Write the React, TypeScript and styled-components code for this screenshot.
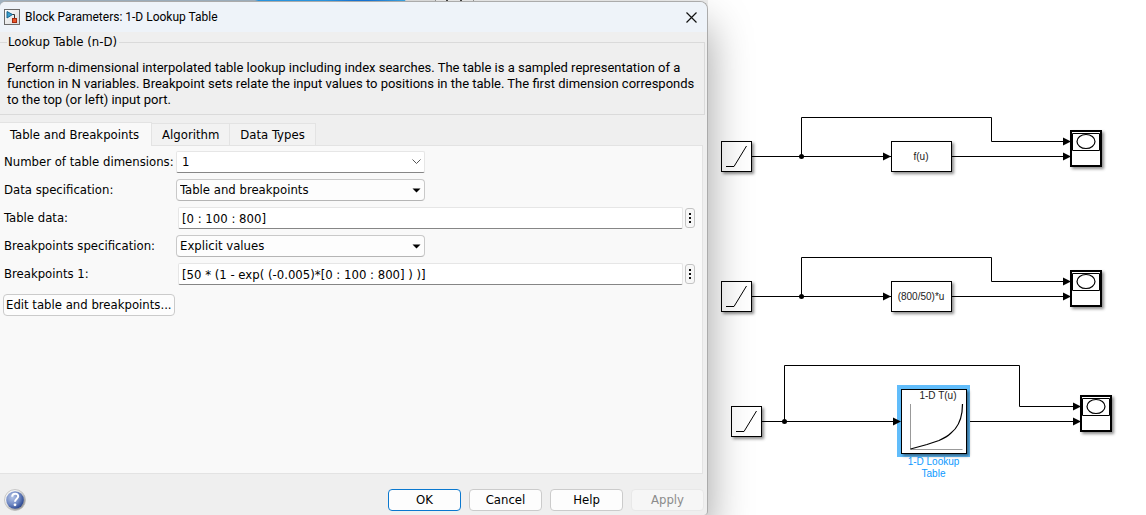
import React from 'react';
import styled, { createGlobalStyle, css } from 'styled-components';

const UI_FONT = '"DejaVu Sans Condensed", "DejaVu Sans", sans-serif';

const GlobalStyle = createGlobalStyle`
  *, *::before, *::after { box-sizing: border-box; }
  body { margin: 0; background: #fff; color: #000; }
  button, input, select { font: inherit; color: inherit; }
`;

const Screen = styled.div`
  display: grid;
  grid-template-columns: 708fr 438fr;
  min-height: 100vh;
  overflow: hidden;
  font: 13px/16px ${UI_FONT};
`;

const DialogArea = styled.div`
  display: flex;
  position: relative;
  z-index: 1;
  padding-top: 1px;
  background: linear-gradient(90deg, #a3b5c4 0 36%, #2b9be8 36.5% 46%, #1878dc 50% 52%, #3fa9e6 57.2%, #e2e2e2 57.3% 61.4%, #999 61.4% 61.6%, #eee 61.6% 63%, #444 63% 63.3%, #eee 63.3% 65%, #444 65% 65.3%, #eee 65.3% 66.8%, #999 66.8% 67%, #eee 67%) 0 0 / 100% 8px no-repeat;
`;

const DialogWindow = styled.section`
  display: flex;
  flex-direction: column;
  flex: 1;
  min-width: 0;
  background: #efefef;
  border: 1px solid #ababab;
  border-width: 1px 1px 0 0;
  border-radius: 6px 8px 4px 0;
  box-shadow: 0 24px 44px rgba(0, 0, 0, 0.38);
`;

const TitleBar = styled.header`
  display: flex;
  align-items: center;
  gap: 5px;
  height: 30px;
  padding: 0 8px 0 4px;
  background: #eef3f9;
  border-radius: 5px 7px 0 0;
`;

const Title = styled.h1`
  flex: 1;
  margin: 0;
  font: 12px/16px Roboto, sans-serif;
`;

const CloseButton = styled.button`
  display: flex;
  padding: 2px;
  border: 0;
  background: none;
`;

const Description = styled.fieldset`
  margin: 2px 2px 0 0;
  padding: 10px 4px 6px 7px;
  min-width: 0;
  border: 1px solid #dadada;
  border-left: 0;
`;

const Legend = styled.legend`
  padding: 0 2px 0 1px;
`;

const Paragraph = styled.p`
  margin: 0;
  font-family: Roboto, sans-serif;
`;

const TabList = styled.div`
  display: flex;
  align-items: flex-end;
  margin-top: 7px;
`;

const Tab = styled.button<{ $active?: boolean }>`
  height: ${p => (p.$active ? 24 : 22)}px;
  margin-bottom: ${p => (p.$active ? -1 : 0)}px;
  padding: 0 ${p => (p.$active ? 12 : 10)}px 0 10px;
  position: relative;
  border: 1px solid #e3e3e3;
  border-bottom: 0;
  border-left: 0;
  background: ${p => (p.$active ? '#f9f9f9' : '#f2f2f2')};
`;

const Pane = styled.div`
  flex: 1;
  margin-right: 4px;
  padding: 2px 7px 0 3px;
  border: 1px solid #e3e3e3;
  border-left: 0;
  background: #f9f9f9;
`;

const Row = styled.div`
  display: grid;
  grid-template-columns: 173px minmax(0, 1fr);
  align-items: center;
  height: 28px;
`;

const Label = styled.label`
  padding-left: 1px;
  white-space: nowrap;
`;

const SelectWrap = styled.div`
  display: grid;
  align-items: center;
  width: 249px;
  max-width: 100%;
  > * { grid-area: 1 / 1; }
  > svg { justify-self: end; margin-right: 4px; pointer-events: none; }
`;

const flatField = css`
  border: 1px solid #e6e6e6;
  border-bottom-color: #868686;
  border-radius: 2px;
  background: #fff;
`;

const Select = styled.select<{ $flat?: boolean }>`
  appearance: none;
  width: 100%;
  height: 22px;
  padding: 0 20px 0 3px;
  border: 1px solid #c9c9c9;
  border-bottom-color: #b5b5b5;
  border-radius: 4px;
  background: #fdfdfd;
  ${p => p.$flat && css`${flatField} padding-left: 5px;`}
`;

const InputGroup = styled.div`
  display: flex;
  align-items: center;
  gap: 2px;
  padding-left: 2px;
`;

const TextInput = styled.input`
  flex: 1;
  min-width: 0;
  height: 22px;
  padding: 0 3px;
  ${flatField}
`;

const MoreButton = styled.button`
  display: flex;
  align-items: center;
  justify-content: center;
  width: 10px;
  height: 20px;
  padding: 0;
  border: 1px solid #c4c4c4;
  border-radius: 3px;
  background: #f7f7f7;
`;

const Button = styled.button<{ $primary?: boolean }>`
  min-width: 73px;
  height: 22px;
  padding: 0 2px;
  border: 1px solid ${p => (p.$primary ? '#0a78cf' : '#cbcbcb')};
  border-radius: 4px;
  background: #fdfdfd;
  white-space: nowrap;
  &:disabled {
    color: #8b8b8b;
    border-color: #e8e8e8;
    background: #f6f6f6;
  }
`;

const EditRow = styled.div`
  padding-top: 6px;
`;

const Footer = styled.footer`
  display: flex;
  align-items: center;
  gap: 8px;
  padding: 15px 3px 4px 4px;
`;

const HelpButton = styled.button`
  display: flex;
  margin-right: auto;
  padding: 0;
  border: 0;
  background: none;
`;

const Canvas = styled.main`
  position: relative;
  min-width: 0;
  overflow: hidden;
`;

const Diagram = styled.svg`
  display: block;
  font-family: "Liberation Sans", Arial, sans-serif;
`;

function SimulinkIcon() {
  return (
    <svg width="16" height="16" viewBox="0 0 16 16" aria-hidden="true">
      <defs>
        <linearGradient id="iconBg" x1="0" y1="0" x2="1" y2="1">
          <stop offset="0" stopColor="#fff" />
          <stop offset="1" stopColor="#d8d8d8" />
        </linearGradient>
      </defs>
      <rect x="0.5" y="0.5" width="15" height="15" fill="url(#iconBg)" stroke="#6b6b6b" />
      <path d="M8 5.5h2.500v4" fill="none" stroke="#333" />
      <path d="M3 2.500v6.500l5.500-3.500z" fill="#3aa0cf" stroke="#17648f" />
      <rect x="8.500" y="9.500" width="4" height="4" fill="#e8562a" stroke="#a42a10" />
    </svg>
  );
}

function HelpIcon() {
  return (
    <svg width="22" height="22" viewBox="0 0 22 22" aria-hidden="true">
      <defs>
        <radialGradient id="helpBall" cx="0.35" cy="0.35" r="0.75">
          <stop offset="0" stopColor="#b4c4e6" />
          <stop offset="0.55" stopColor="#7089c4" />
          <stop offset="1" stopColor="#1d3a86" />
        </radialGradient>
        <linearGradient id="helpRim" x1="0" y1="0" x2="1" y2="1">
          <stop offset="0.300" stopColor="#f4f4f4" />
          <stop offset="1" stopColor="#777" />
        </linearGradient>
      </defs>
      <circle cx="11" cy="11" r="10.500" fill="url(#helpRim)" stroke="#bcbcbc" strokeWidth="0.800" />
      <circle cx="11" cy="11" r="8.800" fill="url(#helpBall)" />
      <path d="M8.200 7.800c0-4 6-4 6-0.600 0 2.400-3.200 2.600-3.200 5.600" fill="none" stroke="#fff" strokeWidth="2" />
      <circle cx="11" cy="15.800" r="1.400" fill="#fff" />
    </svg>
  );
}

function ChevronIcon() {
  return (
    <svg width="9" height="6" viewBox="0 0 9 6" aria-hidden="true">
      <path d="M0.500 0.500l4 4 4-4" fill="none" stroke="#555" />
    </svg>
  );
}

function TriangleIcon() {
  return (
    <svg width="9" height="5" viewBox="0 0 9 5" aria-hidden="true">
      <path d="M0.500 0.500h8l-4 4z" fill="#000" />
    </svg>
  );
}

function DotsIcon() {
  return (
    <svg width="2" height="10" viewBox="0 0 2 10" aria-hidden="true">
      <path d="M0 0h2v2h-2zM0 4h2v2h-2zM0 8h2v2h-2z" fill="#111" />
    </svg>
  );
}

function Choice({ id, label, value, flat }: { id: string; label: string; value: string; flat?: boolean }) {
  return (
    <Row>
      <Label htmlFor={id}>{label}</Label>
      <SelectWrap>
        <Select id={id} $flat={flat} defaultValue={value}>
          <option>{value}</option>
        </Select>
        {flat ? <ChevronIcon /> : <TriangleIcon />}
      </SelectWrap>
    </Row>
  );
}

function Field({ id, label, value }: { id: string; label: string; value: string }) {
  return (
    <Row>
      <Label htmlFor={id}>{label}</Label>
      <InputGroup>
        <TextInput id={id} type="text" defaultValue={value} />
        <MoreButton type="button" aria-label={`${label} actions`}>
          <DotsIcon />
        </MoreButton>
      </InputGroup>
    </Row>
  );
}

function Arrow({ x, y }: { x: number; y: number }) {
  return <path d={`M${x} ${y}l-8-4v8z`} fill="#000" />;
}

function Ramp({ x, y }: { x: number; y: number }) {
  return (
    <g transform={`translate(${x} ${y})`}>
      <rect x="0.5" y="0.5" width="30" height="30" fill="#fff" stroke="#000" filter="url(#blockShadow)" />
      <path d="M5 25.500h8l12.500-20.500" fill="none" stroke="#000" />
    </g>
  );
}

function Scope({ x, y }: { x: number; y: number }) {
  return (
    <g transform={`translate(${x} ${y})`}>
      <rect x="1" y="1" width="30" height="35" fill="#fff" stroke="#000" strokeWidth="2" filter="url(#blockShadow)" />
      <path d="M2.500 20.500v-17h27v17z" fill="none" stroke="#000" />
      <ellipse cx="16" cy="11.500" rx="9" ry="7" fill="none" stroke="#000" strokeWidth="1.200" />
    </g>
  );
}

function FunctionModel({ y, text }: { y: number; text: string }) {
  return (
    <g transform={`translate(0 ${y})`}>
      <path d="M44 39.500h139M244 39.500h112M93.500 39.500v-39h190v24h73" fill="none" stroke="#000" />
      <circle cx="93.500" cy="39.500" r="2.500" />
      <Ramp x={13} y={24} />
      <rect x="183.500" y="24.500" width="60" height="30" fill="#fff" stroke="#000" filter="url(#blockShadow)" />
      <text x="213" y="43" fontSize="10" textAnchor="middle" fill="#222">{text}</text>
      <Scope x={362} y={13} />
      <Arrow x={183} y={39.5} />
      <Arrow x={363} y={24.5} />
      <Arrow x={363} y={39.5} />
    </g>
  );
}

function LookupModel() {
  return (
    <g>
      <path d="M54 421.500h140M259 421.500h107M76.500 421.500v-56h235v41h55" fill="none" stroke="#000" />
      <circle cx="76.500" cy="421.500" r="2.500" />
      <Ramp x={23} y={406} />
      <rect x="189" y="385" width="73" height="72" fill="#61bdfb" />
      <rect x="193.500" y="389.500" width="65" height="64" fill="#fff" stroke="#000" filter="url(#blockShadow)" />
      <path d="M202.500 404v45.500h52" fill="none" stroke="#999" />
      <path d="M202.500 449L219 444.500 231 440.500Q239 437 243 433 252 426 254 412L254.500 404" fill="none" stroke="#000" strokeWidth="1.200" />
      <text x="230" y="399" fontSize="10" textAnchor="middle" fill="#222">1-D T(u)</text>
      <text fontSize="10" textAnchor="middle" fill="#0d99ff">
        <tspan x="225.500" y="465">1-D Lookup</tspan>
        <tspan x="225.500" y="477">Table</tspan>
      </text>
      <Scope x={372} y={395} />
      <Arrow x={193} y={421.5} />
      <Arrow x={373} y={406.5} />
      <Arrow x={373} y={421.5} />
    </g>
  );
}

export default function App() {
  return (
    <>
      <GlobalStyle />
      <Screen>
        <DialogArea>
          <DialogWindow role="dialog" aria-labelledby="dialog-title">
            <TitleBar>
              <SimulinkIcon />
              <Title id="dialog-title">Block Parameters: 1-D Lookup Table</Title>
              <CloseButton type="button" aria-label="Close">
                <svg width="11" height="11" viewBox="0 0 11 11" aria-hidden="true">
                  <path d="M0.500 0.500l10 10M10.500 0.500l-10 10" stroke="#111" strokeWidth="1.200" />
                </svg>
              </CloseButton>
            </TitleBar>
            <Description>
              <Legend>Lookup Table (n-D)</Legend>
              <Paragraph>
                Perform n-dimensional interpolated table lookup including index searches. The table is a sampled representation of a
                <br />
                function in N variables. Breakpoint sets relate the input values to positions in the table. The first dimension corresponds
                <br />
                to the top (or left) input port.
              </Paragraph>
            </Description>
            <TabList role="tablist">
              <Tab type="button" role="tab" aria-selected="true" $active>Table and Breakpoints</Tab>
              <Tab type="button" role="tab" aria-selected="false">Algorithm</Tab>
              <Tab type="button" role="tab" aria-selected="false">Data Types</Tab>
            </TabList>
            <Pane role="tabpanel">
              <Choice id="dimensions" label="Number of table dimensions:" value="1" flat />
              <Choice id="data-spec" label="Data specification:" value="Table and breakpoints" />
              <Field id="table-data" label="Table data:" value="[0 : 100 : 800]" />
              <Choice id="bp-spec" label="Breakpoints specification:" value="Explicit values" />
              <Field id="bp-1" label="Breakpoints 1:" value="[50 * (1 - exp( (-0.005)*[0 : 100 : 800] ) )]" />
              <EditRow>
                <Button type="button">Edit table and breakpoints...</Button>
              </EditRow>
            </Pane>
            <Footer>
              <HelpButton type="button" aria-label="Help topics">
                <HelpIcon />
              </HelpButton>
              <Button type="button" $primary>OK</Button>
              <Button type="button">Cancel</Button>
              <Button type="button">Help</Button>
              <Button type="button" disabled>Apply</Button>
            </Footer>
          </DialogWindow>
        </DialogArea>
        <Canvas>
          <Diagram width="438" height="500" viewBox="0 0 438 500" role="img" aria-label="Block diagram">
            <defs>
              <filter id="blockShadow" x="-20%" y="-20%" width="150%" height="150%">
                <feDropShadow dx="2" dy="2" stdDeviation="1.500" floodColor="#000" floodOpacity="0.450" />
              </filter>
            </defs>
            <FunctionModel y={117} text="f(u)" />
            <FunctionModel y={257} text="(800/50)*u" />
            <LookupModel />
          </Diagram>
        </Canvas>
      </Screen>
    </>
  );
}
